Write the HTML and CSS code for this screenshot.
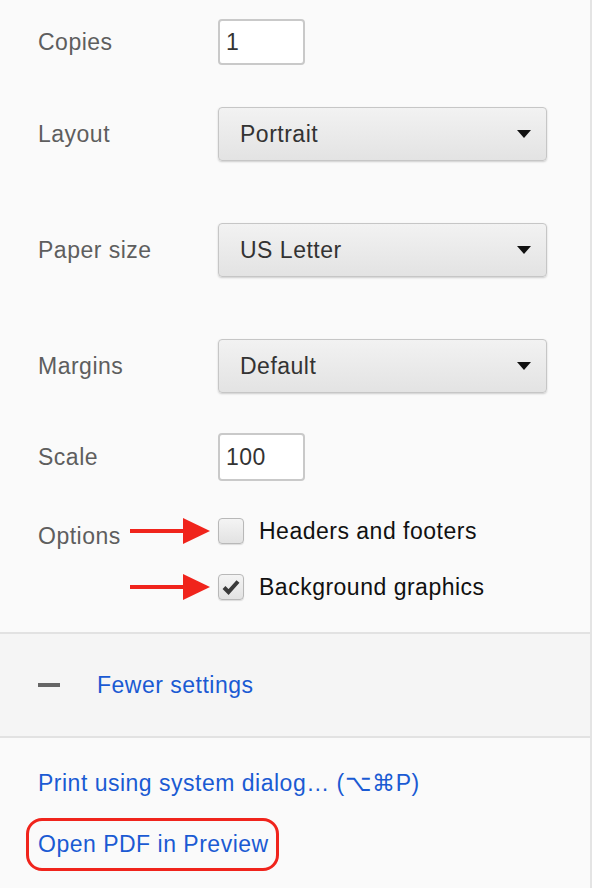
FILE: index.html
```html
<!DOCTYPE html>
<html lang="en">
<head>
    <meta charset="UTF-8">
    <meta name="viewport" content="width=device-width, initial-scale=1.0">
    <title>Print Settings</title>
    <link rel="stylesheet" href="styles.css">
</head>
<body>
    <div class="panel">
        <div class="settings">
            <div class="row row-copies">
                <span class="label">Copies</span>
                <input class="num-input" type="text" value="1">
            </div>
            <div class="row row-select">
                <span class="label">Layout</span>
                <div class="select"><span>Portrait</span><span class="caret"></span></div>
            </div>
            <div class="row row-select">
                <span class="label">Paper size</span>
                <div class="select"><span>US Letter</span><span class="caret"></span></div>
            </div>
            <div class="row row-select row-last-select">
                <span class="label">Margins</span>
                <div class="select"><span>Default</span><span class="caret"></span></div>
            </div>
            <div class="row row-scale">
                <span class="label">Scale</span>
                <input class="num-input" type="text" value="100">
            </div>
            <div class="row row-options">
                <span class="label options-label">Options</span>
                <div class="checks">
                    <div class="check-item">
                        <span class="arrow"></span>
                        <span class="checkbox"></span>
                        <span class="check-text">Headers and footers</span>
                    </div>
                    <div class="check-item">
                        <span class="arrow"></span>
                        <span class="checkbox">
                            <svg width="18" height="16" viewBox="0 0 18 16"><path d="M2 8.5 L6.5 13 L16 2.5" fill="none" stroke="#3a3a3a" stroke-width="4" stroke-linejoin="miter"/></svg>
                        </span>
                        <span class="check-text">Background graphics</span>
                    </div>
                </div>
            </div>
        </div>

        <div class="more">
            <span class="minus"></span>
            <a class="link" href="#">Fewer settings</a>
        </div>

        <div class="footer-links">
            <a class="link" href="#">Print using system dialog… (⌥⌘P)</a>
            <a class="link circled" href="#">Open PDF in Preview</a>
        </div>
    </div>
</body>
</html>
```

FILE: styles.css
```css
body {
    margin: 0;
    background-color: #fafafa;
    font-family: 'Liberation Sans', Arial, sans-serif;
    letter-spacing: 0.5px;
}

.panel {
    width: 590px;
    height: 888px;
    border-right: 2px solid #e4e4e4;
}

.settings {
    padding: 19px 0 0 38px;
    height: 632px;
    box-sizing: border-box;
}

.row {
    display: flex;
    align-items: center;
}

.label {
    width: 180px;
    font-size: 23px;
    color: #5e5e5e;
}

.row-copies {
    height: 46px;
    margin-bottom: 42px;
}

.row-select {
    height: 54px;
    margin-bottom: 62px;
}

.row-last-select {
    margin-bottom: 40px;
}

.row-scale {
    height: 48px;
    margin-bottom: 37px;
}

.num-input {
    width: 87px;
    height: 100%;
    box-sizing: border-box;
    border: 2px solid #c9c9c9;
    border-radius: 4px;
    background: #fff;
    padding: 0 0 0 6px;
    font-family: inherit;
    font-size: 23px;
    letter-spacing: 0.5px;
    color: #333;
    outline: none;
}

.select {
    width: 329px;
    height: 54px;
    box-sizing: border-box;
    display: flex;
    align-items: center;
    justify-content: space-between;
    padding: 0 15px 0 21px;
    border: 1px solid #c6c6c6;
    border-radius: 4px;
    background: linear-gradient(#f2f2f2, #e3e3e3);
    box-shadow: 0 1px 2px rgba(0, 0, 0, 0.18);
    font-size: 23px;
    color: #333;
}

.caret {
    width: 0;
    height: 0;
    border-left: 7px solid transparent;
    border-right: 7px solid transparent;
    border-top: 8px solid #111;
}

.row-options {
    align-items: flex-start;
}

.options-label {
    padding-top: 5px;
}

.checks {
    display: flex;
    flex-direction: column;
    gap: 30px;
}

.check-item {
    position: relative;
    display: flex;
    align-items: center;
    height: 26px;
}

.checkbox {
    width: 26px;
    height: 26px;
    box-sizing: border-box;
    border: 1px solid #b8b8b8;
    border-radius: 4px;
    background: linear-gradient(#f4f4f4, #e2e2e2);
    box-shadow: 0 1px 1px rgba(0, 0, 0, 0.12);
    display: flex;
    align-items: center;
    justify-content: center;
    margin-right: 15px;
}

.check-text {
    font-size: 23px;
    color: #111;
}

.arrow {
    position: absolute;
    left: -88px;
    top: 0;
    width: 80px;
    height: 26px;
}

.arrow::before {
    content: '';
    position: absolute;
    left: 0;
    top: 11px;
    width: 54px;
    height: 4px;
    background: #f0241c;
}

.arrow::after {
    content: '';
    position: absolute;
    right: 0;
    top: 0;
    border-top: 13px solid transparent;
    border-bottom: 13px solid transparent;
    border-left: 27px solid #f0241c;
}

.more {
    height: 102px;
    border-top: 2px solid #e2e2e2;
    border-bottom: 2px solid #e2e2e2;
    background-color: #f5f5f5;
    display: flex;
    align-items: center;
    padding-left: 38px;
}

.minus {
    width: 22px;
    height: 4px;
    background: #666;
    margin-right: 37px;
}

.link {
    font-size: 23px;
    color: #1a5ad3;
    text-decoration: none;
}

.footer-links {
    padding: 32px 0 0 38px;
    display: flex;
    flex-direction: column;
    align-items: flex-start;
    gap: 34px;
}

.circled {
    position: relative;
}

.circled::after {
    content: '';
    position: absolute;
    left: -12px;
    right: -10px;
    top: -13px;
    bottom: -13px;
    border: 3px solid #f0241c;
    border-radius: 16px;
}
```
